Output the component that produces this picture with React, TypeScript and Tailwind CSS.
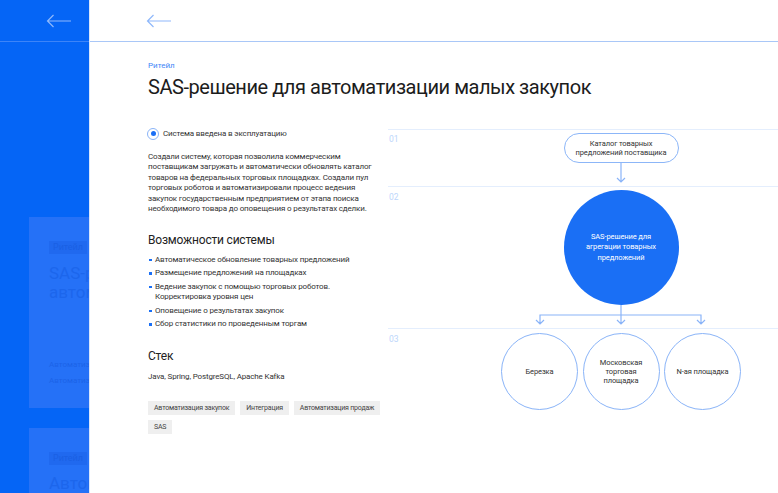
import React from "react";

const font = { fontFamily: "Roboto, 'Noto Sans', Arial, sans-serif" };

function ArrowLeft({ color }: { color: string }) {
  return (
    <svg width="26" height="14" viewBox="0 0 26 14" fill="none">
      <path d="M25 7H1.5M7.5 1L1.5 7L7.5 13" stroke={color} strokeWidth="1.2" />
    </svg>
  );
}

function GhostCard({ second }: { second?: boolean }) {
  return (
    <div
      className={`w-[61px] overflow-hidden whitespace-nowrap bg-[#2571f7] pl-[20px] ${
        second ? "h-[80px] pt-[23.5px]" : "h-[191px] pt-[24px]"
      }`}
    >
      <div className="w-fit bg-[#2069ef] px-[4px] text-[9px] leading-[13px] text-[#1a60e4]">Ритейл</div>
      {second ? (
        <div className="mt-[9px] text-[17px] leading-[19px] text-[#1c66ec]">Автоматизация</div>
      ) : (
        <>
          <div className="mt-[10px] text-[17px] leading-[19px] text-[#1c66ec]">
            SAS-решение для
            <br />
            автоматизации
          </div>
          <div className="mt-[55px] text-[8px] leading-[16px] text-[#1c63e8]">
            Автоматизация
            <br />
            Автоматизация
          </div>
        </>
      )}
    </div>
  );
}

function Sidebar() {
  return (
    <div className="w-[90px] h-[493px] shrink-0 bg-[#0565f6] overflow-hidden border-r border-[#d9e6fc]">
      <div className="h-[42px] border-b border-[#3d84f8] pl-[46px] pt-[14px]">
        <ArrowLeft color="#8fb8fb" />
      </div>
      <div className="pl-[29px] pt-[175px] flex flex-col gap-[20px]">
        <GhostCard />
        <GhostCard second />
      </div>
    </div>
  );
}

function DownArrow() {
  return (
    <svg width="12" height="20" viewBox="0 0 12 20" fill="none">
      <path d="M6 0V19M2 15L6 19L10 15" stroke="#8ab4f8" strokeWidth="1.2" />
    </svg>
  );
}

function Connector() {
  return (
    <svg width="240" height="20" viewBox="0 0 240 20" fill="none">
      <path
        d="M120 0V19M39 19V10H200V19M35 15L39 19L43 15M116 15L120 19L124 15M196 15L200 19L204 15"
        stroke="#8ab4f8"
        strokeWidth="1.2"
      />
    </svg>
  );
}

function SmallCircle({ children }: { children: React.ReactNode }) {
  return (
    <div className="w-[77px] h-[77px] rounded-full border-[1.5px] border-[#8ab4f8] flex items-center justify-center text-center text-[7.5px] leading-[9px] tracking-[-0.1px] text-[#333]">
      {children}
    </div>
  );
}

function Diagram() {
  return (
    <div className="flex-1 flex flex-col mt-[2px]">
      <div className="h-[57px] border-t border-[#e4eefd] flex">
        <div className="w-[113px] pl-[1px] pt-[4px] text-[8.5px] leading-[10px] text-[#bcd6fb]">01</div>
        <div className="w-[240px] flex flex-col items-center pt-[3px]">
          <div className="w-[115px] h-[30px] rounded-full border border-[#8cb6f8] flex items-center justify-center text-center text-[7.5px] leading-[9px] tracking-[-0.1px] text-[#333]">
            Каталог товарных
            <br />
            предложений поставщика
          </div>
          <DownArrow />
        </div>
      </div>
      <div className="h-[142px] border-t border-[#e4eefd] flex">
        <div className="w-[113px] pl-[1px] pt-[5px] text-[8.5px] leading-[10px] text-[#bcd6fb]">02</div>
        <div className="w-[240px] flex flex-col items-center pt-[3px]">
          <div className="w-[115px] h-[115px] rounded-full bg-[#1a6ff5] flex items-center justify-center text-center text-[7.5px] leading-[10.5px] tracking-[-0.1px] text-white">
            SAS-решение для
            <br />
            агрегации товарных
            <br />
            предложений
          </div>
          <Connector />
        </div>
      </div>
      <div className="border-t border-[#e4eefd] flex">
        <div className="w-[113px] pl-[1px] pt-[5px] text-[8.5px] leading-[10px] text-[#bcd6fb]">03</div>
        <div className="w-[240px] flex justify-between pt-[4px]">
          <SmallCircle>Березка</SmallCircle>
          <SmallCircle>
            Московская
            <br />
            торговая
            <br />
            площадка
          </SmallCircle>
          <SmallCircle>N-ая площадка</SmallCircle>
        </div>
      </div>
    </div>
  );
}

const features = [
  "Автоматическое обновление товарных предложений",
  "Размещение предложений на площадках",
  "Ведение закупок с помощью торговых роботов. Корректировка уровня цен",
  "Оповещение о результатах закупок",
  "Сбор статистики по проведенным торгам",
];

const tagRows = [["Автоматизация закупок", "Интеграция", "Автоматизация продаж"], ["SAS"]];

export default function App() {
  return (
    <div className="w-[778px] h-[493px] flex bg-white overflow-hidden" style={font}>
      <Sidebar />
      <div className="flex-1 flex flex-col">
        <div className="h-[42px] border-b border-[#a9c7f7] pl-[56px] pt-[14px]">
          <ArrowLeft color="#8fb8fb" />
        </div>
        <div className="pl-[58px]">
          <div className="mt-[18px] text-[8px] leading-[12px] text-[#3f87f7]">Ритейл</div>
          <div className="mt-[3px] text-[20px] leading-[24px] tracking-[-0.45px] text-[#1c1c1c]">
            SAS-решение для автоматизации малых закупок
          </div>
          <div className="mt-[28px] flex gap-[12px]">
            <div className="w-[228px] shrink-0">
              <div className="flex items-center h-[13px]">
                <div className="w-[12px] h-[12px] rounded-full border border-[#8ab4f8] flex items-center justify-center -ml-[1px]">
                  <div className="w-[5px] h-[5px] rounded-full bg-[#1a6ff5]" />
                </div>
                <span className="ml-[4px] text-[8px] tracking-[-0.15px] text-[#333]">Система введена в эксплуатацию</span>
              </div>
              <p className="mt-[11.5px] text-[8px] leading-[10.5px] tracking-[-0.15px] text-[#333]">
                Создали систему, которая позволила коммерческим поставщикам загружать и автоматически обновлять
                каталог товаров на федеральных торговых площадках. Создали пул торговых роботов и автоматизировали
                процесс ведения закупок государственным предприятием от этапа поиска необходимого товара до
                оповещения о результатах сделки.
              </p>
              <div className="mt-[18px] text-[12px] leading-[15px] tracking-[-0.2px] text-[#222]">Возможности системы</div>
              <ul className="mt-[7px] flex flex-col gap-[3px]">
                {features.map((f) => (
                  <li key={f} className="flex text-[8px] leading-[10.5px] tracking-[-0.15px] text-[#333]">
                    <span className="w-[2.5px] h-[2.5px] bg-[#1a6ff5] mt-[4px] ml-[1px] mr-[3.5px] shrink-0" />
                    <span>{f}</span>
                  </li>
                ))}
              </ul>
              <div className="mt-[19px] text-[12px] leading-[15px] tracking-[-0.2px] text-[#222]">Стек</div>
              <div className="mt-[7px] text-[8px] leading-[11px] tracking-[-0.15px] text-[#333]">
                Java, Spring, PostgreSQL, Apache Kafka
              </div>
              <div className="mt-[19.5px] flex flex-col gap-[5px]">
                {tagRows.map((row, i) => (
                  <div key={i} className="flex gap-[5px]">
                    {row.map((t) => (
                      <span
                        key={t}
                        className="h-[14px] px-[6px] bg-[#efefef] text-[7px] leading-[14px] tracking-[-0.2px] text-[#444] whitespace-nowrap"
                      >
                        {t}
                      </span>
                    ))}
                  </div>
                ))}
              </div>
            </div>
            <Diagram />
          </div>
        </div>
      </div>
    </div>
  );
}
